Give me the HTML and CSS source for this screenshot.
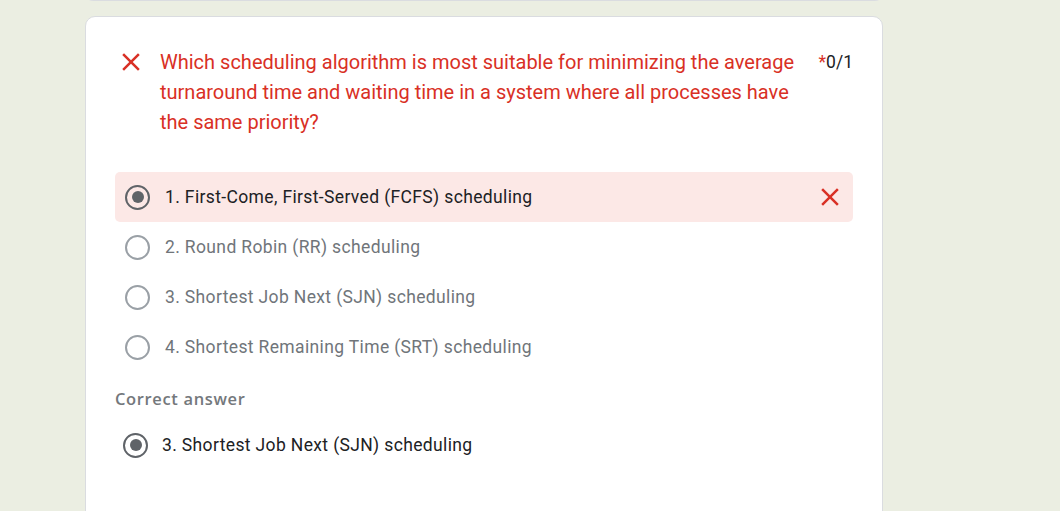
FILE: index.html
```html
<!DOCTYPE html>
<html>
<head>
<meta charset="utf-8">
<link rel="stylesheet" href="styles.css">
</head>
<body>
<div class="page">
  <div class="prev-card"></div>
  <div class="card">
    <div class="q-head">
      <svg class="q-icon" viewBox="0 0 24 24" width="24" height="24"><path d="M19 6.41 17.59 5 12 10.59 6.41 5 5 6.41 10.59 12 5 17.59 6.41 19 12 13.41 17.59 19 19 17.59 13.41 12z" fill="#d93025"/></svg>
      <div class="q-title">Which scheduling algorithm is most suitable for minimizing the average turnaround time and waiting time in a system where all processes have the same priority?</div>
      <div class="q-score"><span class="req">*</span>0/1</div>
    </div>
    <div class="options">
      <div class="opt wrong">
        <span class="radio checked"></span>
        <span class="opt-text">1. First-Come, First-Served (FCFS) scheduling</span>
        <svg class="opt-x" viewBox="0 0 24 24" width="24" height="24"><path d="M19 6.41 17.59 5 12 10.59 6.41 5 5 6.41 10.59 12 5 17.59 6.41 19 12 13.41 17.59 19 19 17.59 13.41 12z" fill="#d93025"/></svg>
      </div>
      <div class="opt">
        <span class="radio"></span>
        <span class="opt-text muted">2. Round Robin (RR) scheduling</span>
      </div>
      <div class="opt">
        <span class="radio"></span>
        <span class="opt-text muted">3. Shortest Job Next (SJN) scheduling</span>
      </div>
      <div class="opt">
        <span class="radio"></span>
        <span class="opt-text muted">4. Shortest Remaining Time (SRT) scheduling</span>
      </div>
    </div>
    <div class="correct-label">Correct answer</div>
    <div class="correct-opt">
      <span class="radio checked"></span>
      <span class="opt-text">3. Shortest Job Next (SJN) scheduling</span>
    </div>
  </div>
</div>
</body>
</html>
```

FILE: styles.css
```css
html, body {
  margin: 0;
  padding: 0;
  background: #ebeee2;
  font-family: Roboto, "Liberation Sans", Arial, sans-serif;
  overflow: hidden;
}
.page {
  padding-left: 85px;
  width: 798px;
}
.prev-card {
  height: 8px;
  margin-top: -7px;
  background: #fff;
  border: 1px solid #dadce0;
  border-top: none;
  border-radius: 0 0 8px 8px;
  box-sizing: border-box;
}
.card {
  margin-top: 15px;
  background: #fff;
  border: 1px solid #dadce0;
  border-radius: 10px;
  box-sizing: border-box;
  padding: 30px 29px 60px 29px;
  height: 520px;
}
.q-head {
  display: flex;
  align-items: flex-start;
}
.q-icon {
  width: 30px;
  height: 30px;
  margin-left: 1px;
  margin-right: 14px;
  flex: none;
}
.q-title {
  flex: 1;
  color: #d93025;
  font-size: 20px;
  line-height: 30px;
  letter-spacing: 0;
}
.q-score {
  flex: none;
  margin-left: 21px;
  font-size: 17.5px;
  line-height: 30px;
  color: #202124;
}
.req { color: #d93025; }
.options {
  margin-top: 35px;
}
.opt {
  display: flex;
  align-items: center;
  height: 50px;
  padding-left: 10px;
  padding-right: 10px;
  border-radius: 5px;
}
.opt.wrong {
  background: #fce8e6;
}
.radio {
  flex: none;
  width: 25px;
  height: 25px;
  box-sizing: border-box;
  border: 2.5px solid #9aa0a6;
  border-radius: 50%;
  position: relative;
  margin-right: 15px;
}
.radio.checked {
  border-color: #5f6368;
}
.radio.checked::after {
  content: "";
  position: absolute;
  left: 50%;
  top: 50%;
  width: 12px;
  height: 12px;
  margin: -6px 0 0 -6px;
  border-radius: 50%;
  background: #5f6368;
}
.opt-text {
  font-size: 17.5px;
  letter-spacing: 0.36px;
  color: #202124;
  flex: 1;
}
.opt-text.muted {
  color: #70757a;
}
.opt-x {
  flex: none;
  width: 30px;
  height: 30px;
  margin-right: -2px;
}
.correct-label {
  margin-top: 15px;
  font-family: "Open Sans", Roboto, sans-serif;
  font-weight: 600;
  font-size: 16.5px;
  letter-spacing: 0.65px;
  color: #74787c;
  line-height: 24px;
}
.correct-opt {
  display: flex;
  align-items: center;
  height: 50px;
  margin-top: 9px;
  padding-left: 8px;
}
.correct-opt .radio { margin-right: 14px; }
```
